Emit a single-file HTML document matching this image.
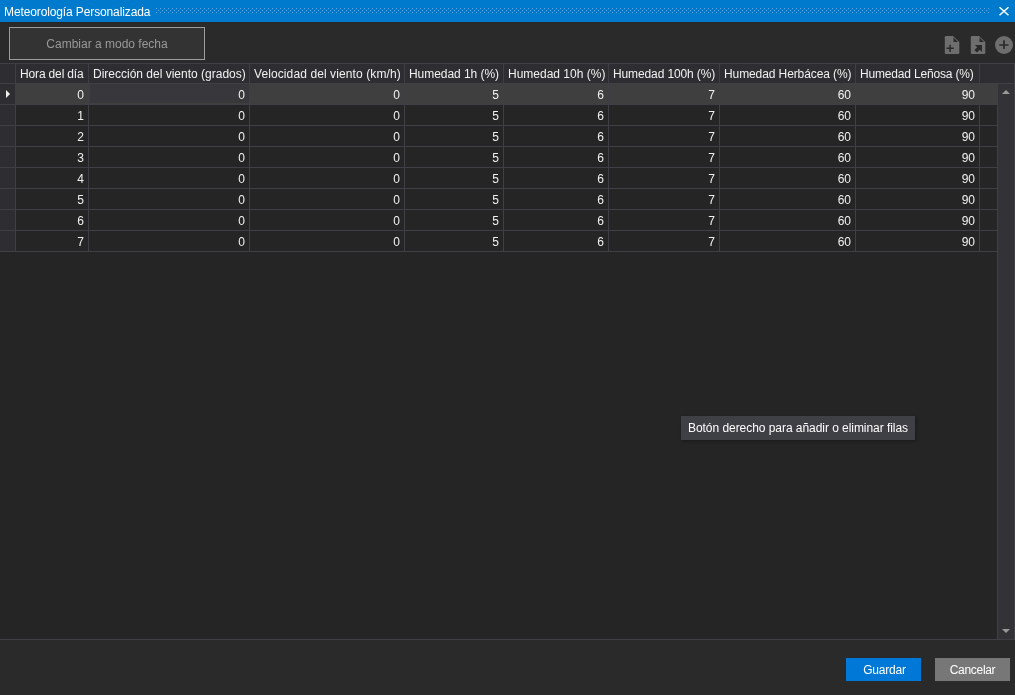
<!DOCTYPE html>
<html><head><meta charset="utf-8"><style>
html,body{margin:0;padding:0}
body{width:1015px;height:695px;overflow:hidden;position:relative;background:#2a2a2a;font-family:"Liberation Sans",sans-serif;font-size:12px;color:#f1f1f1}
.a{position:absolute}
.t{will-change:transform}
.t{position:absolute;white-space:pre;line-height:20px}
.r{text-align:right}
</style></head><body>

<div class="a" style="left:0;top:0;width:1015px;height:22px;background:#007acc"></div>
<div class="a" style="left:0;top:22px;width:1015px;height:1px;background:#2b2623"></div>
<div class="t" style="left:4px;top:2px;color:#fff;letter-spacing:-0.12px">Meteorología Personalizada</div>
<svg class="a" style="left:156px;top:8px" width="834" height="6"><defs><pattern id="dp" width="4" height="4" patternUnits="userSpaceOnUse"><rect x="0" y="0" width="1" height="1" fill="#5ea5e0"/><rect x="2" y="2" width="1" height="1" fill="#5ea5e0"/></pattern></defs><rect width="833" height="5" fill="url(#dp)"/></svg>
<svg class="a" style="left:998px;top:6px" width="12" height="11"><path d="M1.5 1.3 L10.5 9.2 M10.5 1.3 L1.5 9.2" stroke="#fff" stroke-width="1.5" fill="none"/></svg>
<div class="a" style="left:9px;top:27px;width:194px;height:31px;border:1px solid #9d9d9d;background:#333333"></div>
<div class="t" style="left:9px;top:34px;width:196px;text-align:center;color:#999999">Cambiar a modo fecha</div>
<svg class="a" style="left:944px;top:35px" width="17" height="20"><path d="M0.8 2.2 Q0.8 1 2 1 L9 1 L15.3 7 L15.3 17.8 Q15.3 19 14.1 19 L2 19 Q0.8 19 0.8 17.8 Z" fill="#6e6e6e"/><path d="M9.5 2.5 L9.5 7 L14 7 Z" fill="#2a2a2a"/><path d="M2.5 13.3 H9.8 M6.1 9.8 V17" stroke="#2a2a2a" stroke-width="1.5"/></svg>
<svg class="a" style="left:970px;top:35px" width="17" height="20"><path d="M0.8 2.2 Q0.8 1 2 1 L9 1 L15.3 7 L15.3 17.8 Q15.3 19 14.1 19 L2 19 Q0.8 19 0.8 17.8 Z" fill="#6e6e6e"/><path d="M9.5 2.5 L9.5 7 L14 7 Z" fill="#2a2a2a"/><path d="M5 10 L12 10 L12 17 L9.8 14.8 L7 17.6 L4.4 15 L7.2 12.2 Z" fill="#2a2a2a"/></svg>
<svg class="a" style="left:994px;top:35px" width="20" height="20"><circle cx="10" cy="10" r="9" fill="#6e6e6e"/><path d="M5.3 10 H14.5 M10 5.3 V14" stroke="#2a2a2a" stroke-width="1.7"/></svg>
<div class="a" style="left:0;top:63px;width:1015px;height:577px;background:#252526"></div>
<div class="a" style="left:0;top:64px;width:1014px;height:19px;background:#2e2e32"></div>
<div class="a" style="left:0;top:84px;width:15px;height:167px;background:#2e2e32"></div>
<div class="a" style="left:16px;top:84px;width:981px;height:20px;background:#3f3f40"></div>
<div class="a" style="left:90px;top:84px;width:159px;height:19px;background:#38383c"></div>
<div class="a" style="left:0;top:63px;width:1015px;height:1px;background:#3f3f46"></div>
<div class="a" style="left:0;top:83px;width:1015px;height:1px;background:#3f3f46"></div>
<div class="a" style="left:0;top:104px;width:997px;height:1px;background:#3f3f46"></div>
<div class="a" style="left:0;top:125px;width:997px;height:1px;background:#3f3f46"></div>
<div class="a" style="left:0;top:146px;width:997px;height:1px;background:#3f3f46"></div>
<div class="a" style="left:0;top:167px;width:997px;height:1px;background:#3f3f46"></div>
<div class="a" style="left:0;top:188px;width:997px;height:1px;background:#3f3f46"></div>
<div class="a" style="left:0;top:209px;width:997px;height:1px;background:#3f3f46"></div>
<div class="a" style="left:0;top:230px;width:997px;height:1px;background:#3f3f46"></div>
<div class="a" style="left:0;top:251px;width:997px;height:1px;background:#3f3f46"></div>
<div class="a" style="left:0;top:639px;width:1015px;height:1px;background:#3f3f46"></div>
<div class="a" style="left:15px;top:63px;width:1px;height:189px;background:#3f3f46"></div>
<div class="a" style="left:88px;top:63px;width:1px;height:189px;background:#3f3f46"></div>
<div class="a" style="left:249px;top:63px;width:1px;height:189px;background:#3f3f46"></div>
<div class="a" style="left:404px;top:63px;width:1px;height:189px;background:#3f3f46"></div>
<div class="a" style="left:503px;top:63px;width:1px;height:189px;background:#3f3f46"></div>
<div class="a" style="left:608px;top:63px;width:1px;height:189px;background:#3f3f46"></div>
<div class="a" style="left:719px;top:63px;width:1px;height:189px;background:#3f3f46"></div>
<div class="a" style="left:855px;top:63px;width:1px;height:189px;background:#3f3f46"></div>
<div class="a" style="left:979px;top:63px;width:1px;height:189px;background:#3f3f46"></div>
<div class="a" style="left:1014px;top:63px;width:1px;height:577px;background:#3f3f46"></div>
<div class="a" style="left:997px;top:84px;width:1px;height:555px;background:#3f3f46"></div>
<div class="a" style="left:998px;top:84px;width:16px;height:555px;background:#333337"></div>
<svg class="a" style="left:1001px;top:89px" width="10" height="6"><path d="M1 5 L5 1 L9 5 Z" fill="#999999"/></svg>
<svg class="a" style="left:1001px;top:628px" width="10" height="6"><path d="M1 1 L9 1 L5 5 Z" fill="#999999"/></svg>
<svg class="a" style="left:5px;top:89px" width="6" height="10"><path d="M1 1 L5 5 L1 9 Z" fill="#f1f1f1"/></svg>
<div class="t" style="left:20px;top:64px;letter-spacing:-0.15px">Hora del día</div>
<div class="t" style="left:93px;top:64px;letter-spacing:0px">Dirección del viento (grados)</div>
<div class="t" style="left:254px;top:64px;letter-spacing:0.1px">Velocidad del viento (km/h)</div>
<div class="t" style="left:409px;top:64px;letter-spacing:-0.05px">Humedad 1h (%)</div>
<div class="t" style="left:508px;top:64px;letter-spacing:0px">Humedad 10h (%)</div>
<div class="t" style="left:613px;top:64px;letter-spacing:-0.12px">Humedad 100h (%)</div>
<div class="t" style="left:724px;top:64px;letter-spacing:-0.1px">Humedad Herbácea (%)</div>
<div class="t" style="left:860px;top:64px;letter-spacing:-0.17px">Humedad Leñosa (%)</div>
<div class="t r" style="left:16px;top:85px;width:68px">0</div>
<div class="t r" style="left:89px;top:85px;width:156px">0</div>
<div class="t r" style="left:250px;top:85px;width:150px">0</div>
<div class="t r" style="left:405px;top:85px;width:94px">5</div>
<div class="t r" style="left:504px;top:85px;width:100px">6</div>
<div class="t r" style="left:609px;top:85px;width:106px">7</div>
<div class="t r" style="left:720px;top:85px;width:131px">60</div>
<div class="t r" style="left:856px;top:85px;width:119px">90</div>
<div class="t r" style="left:16px;top:106px;width:68px">1</div>
<div class="t r" style="left:89px;top:106px;width:156px">0</div>
<div class="t r" style="left:250px;top:106px;width:150px">0</div>
<div class="t r" style="left:405px;top:106px;width:94px">5</div>
<div class="t r" style="left:504px;top:106px;width:100px">6</div>
<div class="t r" style="left:609px;top:106px;width:106px">7</div>
<div class="t r" style="left:720px;top:106px;width:131px">60</div>
<div class="t r" style="left:856px;top:106px;width:119px">90</div>
<div class="t r" style="left:16px;top:127px;width:68px">2</div>
<div class="t r" style="left:89px;top:127px;width:156px">0</div>
<div class="t r" style="left:250px;top:127px;width:150px">0</div>
<div class="t r" style="left:405px;top:127px;width:94px">5</div>
<div class="t r" style="left:504px;top:127px;width:100px">6</div>
<div class="t r" style="left:609px;top:127px;width:106px">7</div>
<div class="t r" style="left:720px;top:127px;width:131px">60</div>
<div class="t r" style="left:856px;top:127px;width:119px">90</div>
<div class="t r" style="left:16px;top:148px;width:68px">3</div>
<div class="t r" style="left:89px;top:148px;width:156px">0</div>
<div class="t r" style="left:250px;top:148px;width:150px">0</div>
<div class="t r" style="left:405px;top:148px;width:94px">5</div>
<div class="t r" style="left:504px;top:148px;width:100px">6</div>
<div class="t r" style="left:609px;top:148px;width:106px">7</div>
<div class="t r" style="left:720px;top:148px;width:131px">60</div>
<div class="t r" style="left:856px;top:148px;width:119px">90</div>
<div class="t r" style="left:16px;top:169px;width:68px">4</div>
<div class="t r" style="left:89px;top:169px;width:156px">0</div>
<div class="t r" style="left:250px;top:169px;width:150px">0</div>
<div class="t r" style="left:405px;top:169px;width:94px">5</div>
<div class="t r" style="left:504px;top:169px;width:100px">6</div>
<div class="t r" style="left:609px;top:169px;width:106px">7</div>
<div class="t r" style="left:720px;top:169px;width:131px">60</div>
<div class="t r" style="left:856px;top:169px;width:119px">90</div>
<div class="t r" style="left:16px;top:190px;width:68px">5</div>
<div class="t r" style="left:89px;top:190px;width:156px">0</div>
<div class="t r" style="left:250px;top:190px;width:150px">0</div>
<div class="t r" style="left:405px;top:190px;width:94px">5</div>
<div class="t r" style="left:504px;top:190px;width:100px">6</div>
<div class="t r" style="left:609px;top:190px;width:106px">7</div>
<div class="t r" style="left:720px;top:190px;width:131px">60</div>
<div class="t r" style="left:856px;top:190px;width:119px">90</div>
<div class="t r" style="left:16px;top:211px;width:68px">6</div>
<div class="t r" style="left:89px;top:211px;width:156px">0</div>
<div class="t r" style="left:250px;top:211px;width:150px">0</div>
<div class="t r" style="left:405px;top:211px;width:94px">5</div>
<div class="t r" style="left:504px;top:211px;width:100px">6</div>
<div class="t r" style="left:609px;top:211px;width:106px">7</div>
<div class="t r" style="left:720px;top:211px;width:131px">60</div>
<div class="t r" style="left:856px;top:211px;width:119px">90</div>
<div class="t r" style="left:16px;top:232px;width:68px">7</div>
<div class="t r" style="left:89px;top:232px;width:156px">0</div>
<div class="t r" style="left:250px;top:232px;width:150px">0</div>
<div class="t r" style="left:405px;top:232px;width:94px">5</div>
<div class="t r" style="left:504px;top:232px;width:100px">6</div>
<div class="t r" style="left:609px;top:232px;width:106px">7</div>
<div class="t r" style="left:720px;top:232px;width:131px">60</div>
<div class="t r" style="left:856px;top:232px;width:119px">90</div>
<div class="a" style="left:681px;top:416px;width:234px;height:24px;background:#3f3f46;box-shadow:1px 1px 3px rgba(0,0,0,0.35)"></div>
<div class="t" style="left:688px;top:418px;color:#fff;letter-spacing:-0.05px">Botón derecho para añadir o eliminar filas</div>
<div class="a" style="left:846px;top:658px;width:75px;height:23px;background:#0078d7"></div>
<div class="t" style="left:847px;top:660px;width:75px;text-align:center;color:#fff;letter-spacing:-0.2px">Guardar</div>
<div class="a" style="left:935px;top:658px;width:75px;height:23px;background:#777777"></div>
<div class="t" style="left:935px;top:660px;width:75px;text-align:center;color:#fff;letter-spacing:-0.3px">Cancelar</div>
</body></html>
